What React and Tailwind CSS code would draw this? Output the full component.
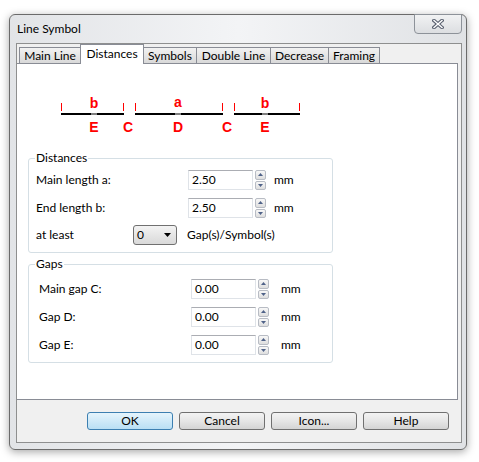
import React from 'react';

const tabs = [
  { label: 'Main Line', w: 'w-[62px]' },
  { label: 'Distances', w: 'w-[64px]', active: true },
  { label: 'Symbols', w: 'w-[54px]' },
  { label: 'Double Line', w: 'w-[75px]' },
  { label: 'Decrease', w: 'w-[59px]' },
  { label: 'Framing', w: 'w-[52px]' },
];

function Spinner() {
  return (
    <div className="flex flex-col w-[11px] h-[20px] gap-[1px]">
      <div className="flex-1 flex items-center justify-center border border-[#b8bcc4] rounded-[2px] bg-linear-to-b from-[#f8f8f8] to-[#dedede]">
        <svg width="5" height="3" viewBox="0 0 5 3"><path d="M0 3L2.5 0L5 3Z" fill="#4f6288" /></svg>
      </div>
      <div className="flex-1 flex items-center justify-center border border-[#b8bcc4] rounded-[2px] bg-linear-to-b from-[#f8f8f8] to-[#dedede]">
        <svg width="5" height="3" viewBox="0 0 5 3"><path d="M0 0L2.5 3L5 0Z" fill="#4f6288" /></svg>
      </div>
    </div>
  );
}

function NumField({ value, unitGap }) {
  return (
    <div className="flex items-center">
      <div className="w-[65px] h-[20px] border border-[#dfe3e8] border-t-[#abadb3] bg-white pl-[3px] leading-[18px]">{value}</div>
      <div className="ml-[2px]">
        <Spinner />
      </div>
      <span className={unitGap}>mm</span>
    </div>
  );
}

function Row({ label, value, labelW, unitGap }) {
  return (
    <div className="flex items-center h-[20px]">
      <span className={labelW}>{label}</span>
      <NumField value={value} unitGap={unitGap} />
    </div>
  );
}

function Diagram() {
  const red = '#ff0000';
  return (
    <svg width="440" height="87" viewBox="0 0 440 87" className="block">
      <rect x="44" y="49" width="63" height="2" fill="#000" />
      <rect x="118" y="49" width="88" height="2" fill="#000" />
      <rect x="217" y="49" width="66" height="2" fill="#000" />
      <rect x="74" y="49" width="6" height="2" fill="#808080" />
      <rect x="158" y="49" width="6" height="2" fill="#808080" />
      <rect x="245" y="49" width="6" height="2" fill="#808080" />
      {[44, 106, 118, 205, 217, 282].map((x) => (
        <rect key={x} x={x} y="39" width="1" height="8" fill={red} />
      ))}
      <g fill={red} fontFamily="'Liberation Sans', Arial, sans-serif" fontWeight="bold" fontSize="14" textAnchor="middle">
        <text x="77" y="44">b</text>
        <text x="161" y="43">a</text>
        <text x="248" y="44">b</text>
        <text x="77" y="68">E</text>
        <text x="111" y="68">C</text>
        <text x="161" y="68">D</text>
        <text x="210" y="68">C</text>
        <text x="248" y="68">E</text>
      </g>
    </svg>
  );
}

function Button({ children, primary }) {
  return (
    <button
      className={
        primary
          ? 'w-[86px] h-[18px] rounded-[3px] border border-[#3c7fb1] bg-linear-to-b from-[#e5f4fc] to-[#b9dff4] text-[12px] leading-none text-black'
          : 'w-[86px] h-[18px] rounded-[3px] border border-[#707070] bg-linear-to-b from-[#f3f3f3] via-[#e6e6e6] to-[#d4d4d4] text-[12px] leading-none text-black'
      }
    >
      {children}
    </button>
  );
}

export default function App() {
  return (
    <div className="w-[479px] h-[462px] bg-white font-[Lato,sans-serif] text-[12px] text-black pt-[14px] pl-[9px]">
      <div className="w-[458px] h-[436px] border border-[#6b6b6b] rounded-[6px] bg-linear-to-r from-[#e2e4e7] via-[#f3f4f6] to-[#e0e2e5] shadow-[0_2px_8px_rgba(0,0,0,0.35)] flex flex-col">
        <div className="h-[28px] flex items-center justify-between">
          <span className="pl-[7px]">Line Symbol</span>
          <div className="self-start -mt-px mr-[4px] w-[48px] h-[20px] rounded-b-[4px] border border-[#8d9299] bg-linear-to-b from-[#f1f2f3] to-[#dcdee1] flex items-center justify-center">
            <svg width="12" height="10" viewBox="0 0 12 10">
              <path d="M2 1.5L10 8.5M10 1.5L2 8.5" stroke="#5a6170" strokeWidth="3.6" strokeLinecap="square" />
              <path d="M2 1.5L10 8.5M10 1.5L2 8.5" stroke="#fff" strokeWidth="1.4" strokeLinecap="square" />
            </svg>
          </div>
        </div>
        <div className="ml-[6px] w-[446px] h-[400px] border border-[#8e8f8f] bg-[#f0f0f0] flex flex-col">
          <div className="h-[19px] flex items-end pl-[2px]">
            {tabs.map((t, i) =>
              t.active ? (
                <div
                  key={t.label}
                  className={`${t.w} h-[20px] -mb-px relative z-10 -ml-px border border-b-0 border-[#898c95] bg-white flex justify-center pt-[2px] leading-[14px]`}
                >
                  {t.label}
                </div>
              ) : (
                <div
                  key={t.label}
                  className={`${t.w} h-[16px] ${i === 0 ? '' : '-ml-px'} border border-b-0 border-[#898c95] bg-linear-to-b from-[#f2f2f2] to-[#d9d9d9] flex justify-center pt-[1px] leading-[14px]`}
                >
                  {t.label}
                </div>
              )
            )}
          </div>
          <div className="w-[441px] h-[337px] border-t border-r border-b border-[#898c95] bg-white">
            <Diagram />
            <fieldset className="ml-[11px] w-[305px] border border-[#d5dfe5] rounded-[3px]">
              <legend className="ml-[6px] px-[1px] leading-[14px]">Distances</legend>
              <div className="flex flex-col pl-[7px] pt-[5px] pb-[7px]">
                <Row label="Main length a:" value="2.50" labelW="w-[152px]" unitGap="ml-[8px]" />
                <div className="h-[8px]" />
                <Row label="End length b:" value="2.50" labelW="w-[152px]" unitGap="ml-[8px]" />
                <div className="h-[7px]" />
                <div className="flex items-center h-[20px]">
                  <span className="w-[97px]">at least</span>
                  <div className="w-[44px] h-[20px] border border-[#707070] rounded-[3px] bg-linear-to-b from-[#f3f3f3] to-[#d9d9d9] flex items-center justify-between pl-[3px] pr-[5px]">
                    <span>0</span>
                    <svg width="7" height="4" viewBox="0 0 7 4"><path d="M0 0H7L3.5 4Z" fill="#000" /></svg>
                  </div>
                  <span className="ml-[10px]">Gap(s)/Symbol(s)</span>
                </div>
              </div>
            </fieldset>
            <fieldset className="mt-[4px] ml-[11px] w-[305px] border border-[#d5dfe5] rounded-[3px]">
              <legend className="ml-[6px] px-[1px] leading-[14px]">Gaps</legend>
              <div className="flex flex-col gap-[8px] pl-[10px] pt-[8px] pb-[7px]">
                <Row label="Main gap C:" value="0.00" labelW="w-[152px]" unitGap="ml-[12px]" />
                <Row label="Gap D:" value="0.00" labelW="w-[152px]" unitGap="ml-[12px]" />
                <Row label="Gap E:" value="0.00" labelW="w-[152px]" unitGap="ml-[12px]" />
              </div>
            </fieldset>
          </div>
          <div className="mt-[12px] flex justify-end gap-[6px] pr-[12px]">
            <Button primary>OK</Button>
            <Button>Cancel</Button>
            <Button>Icon...</Button>
            <Button>Help</Button>
          </div>
        </div>
      </div>
    </div>
  );
}
